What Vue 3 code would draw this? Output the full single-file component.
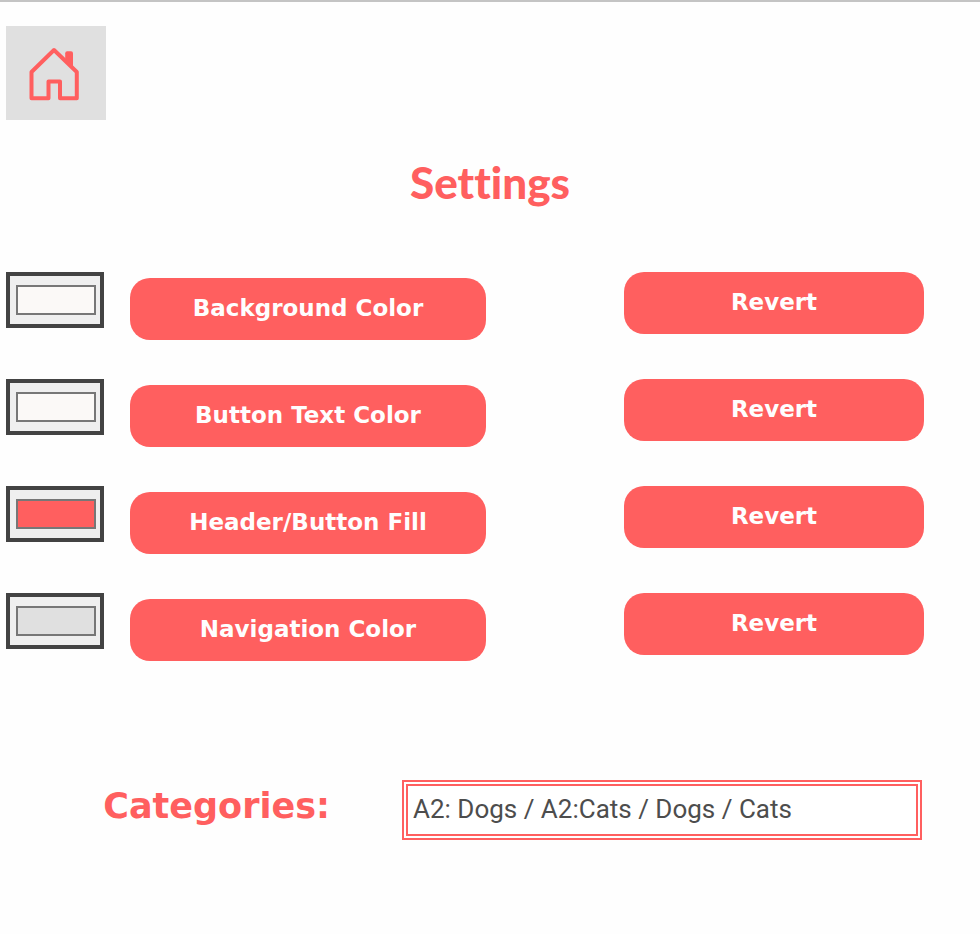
<script setup>
import { ref } from 'vue'

const defaults = [
  { id: 'background', label: 'Background Color', color: '#fbf9f7' },
  { id: 'button-text', label: 'Button Text Color', color: '#fbf9f7' },
  { id: 'fill', label: 'Header/Button Fill', color: '#ff5f5f' },
  { id: 'navigation', label: 'Navigation Color', color: '#e0e0e0' },
]
const settings = ref(defaults.map((item) => ({ ...item })))
const categories = ref('A2: Dogs / A2:Cats / Dogs / Cats')

function revert(index) {
  settings.value[index].color = defaults[index].color
}
</script>

<template>
  <div class="page">
    <nav>
      <a class="home" href="#" aria-label="Home">
        <svg viewBox="0 0 100 94" fill="none" stroke="currentColor" stroke-width="4" stroke-linejoin="round">
          <path d="M48 24 25.500 46V72.200H42.500V55.500H54V72.200H70.800V46Z" />
          <path d="M59.200 27.300a2 2 0 0 1 2-2h3.800a2 2 0 0 1 2 2V43l-7.800-7.800Z" fill="currentColor" stroke="none" />
        </svg>
      </a>
    </nav>
    <main>
      <h1>Settings</h1>
      <ul class="settings">
        <li v-for="(item, index) in settings" :key="item.id" class="setting">
          <input :id="item.id" v-model="item.color" class="picker" type="color" :aria-label="item.label" />
          <button type="button" class="pill name">{{ item.label }}</button>
          <button type="button" class="pill revert" @click="revert(index)">Revert</button>
        </li>
      </ul>
      <div class="categories">
        <label for="categories">Categories:</label>
        <input id="categories" v-model="categories" type="text" />
      </div>
    </main>
  </div>
</template>

<style>
body {
  background: #fefefe;
}
</style>

<style scoped>
.page {
  border-top: 2px solid #c4c4c4;
  padding-top: 24px;
  color: #ff5f5f;
  font-family: "DejaVu Sans", sans-serif;
}
.home {
  display: block;
  width: 100px;
  height: 94px;
  margin-left: 6px;
  background: #e0e0e0;
  color: #ff5f5f;
}
.home svg {
  display: block;
  width: 100%;
}
h1 {
  margin: 32px 0 60px;
  font: 900 44px/60px Lato, sans-serif;
  font-variant-ligatures: none;
  text-align: center;
}
.settings {
  display: grid;
  gap: 39px;
  margin: 0;
  padding: 0 0 0 6px;
  list-style: none;
}
.setting {
  display: grid;
  grid-template-columns: 124px 356fr 138fr 300fr 56fr;
  align-items: start;
}
.picker {
  box-sizing: border-box;
  width: 98px;
  height: 56px;
  padding: 0;
  border: 4px solid #434343;
  border-radius: 0;
  background: #efefef;
}
.picker::-webkit-color-swatch-wrapper {
  padding: 9px 4px 9px 6px;
}
.picker::-webkit-color-swatch {
  border: 2px solid #777;
  border-radius: 0;
}
.pill {
  height: 62px;
  padding: 0 0 2px;
  border: 0;
  border-radius: 20px;
  background: #ff5f5f;
  color: #fefefe;
  font: 700 23px/30px "DejaVu Sans", sans-serif;
}
.name {
  margin-top: 6px;
}
.revert {
  grid-column: 4;
}
.categories {
  display: grid;
  grid-template-columns: 402fr 520fr 58fr;
  align-items: start;
  margin-top: 119px;
}
label {
  padding: 6px 72px 0 0;
  font-size: 35px;
  font-weight: 700;
  line-height: 40px;
  text-align: right;
}
.categories input {
  box-sizing: border-box;
  min-width: 0;
  width: 100%;
  height: 60px;
  padding: 0 5px 2px;
  border: 6px double #ff5f5f;
  border-radius: 0;
  background: #fff;
  color: #4d4d4d;
  font: 26px/30px Roboto, sans-serif;
}
</style>
